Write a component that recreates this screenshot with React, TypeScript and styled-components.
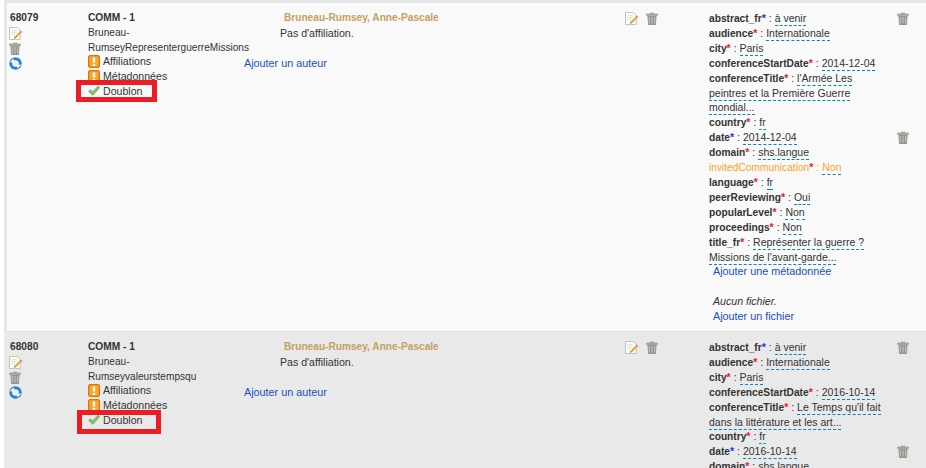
import React from "react";
import styled, { createGlobalStyle } from "styled-components";

const Global = createGlobalStyle`
  html, body { margin: 0; padding: 0; height: 468px; overflow: hidden; background: #fff; }
  body { font-family: "Liberation Sans", Arial, sans-serif; font-size: 10.6px; line-height: 14.9px; color: #333; }
`;

const Page = styled.div`
  width: 926px;
  height: 468px;
  overflow: hidden;
  padding-left: 4px;
  box-sizing: border-box;
`;

const List = styled.div`
  background: #e6e6e6;
  padding: 3px 0 0 3px;
`;

const Row = styled.div<{ $alt?: boolean }>`
  display: grid;
  grid-template-columns: 81px 156px 381px 84px 1fr;
  height: 329px;
  padding-top: 8px;
  box-sizing: border-box;
  margin-left: ${(p) => (p.$alt ? "-3px" : "0")};
  padding-left: ${(p) => (p.$alt ? "3px" : "0")};
  background: ${(p) => (p.$alt ? "#e9e9e9" : "#f9f9f9")};
  border-bottom: 1px solid #dcdcdc;
`;

const IdCol = styled.div`
  padding-left: 3px;
`;

const IdNum = styled.div`
  font-weight: bold;
  font-size: 10.2px;
`;

const IconStack = styled.div`
  display: flex;
  flex-direction: column;
  align-items: flex-start;
  gap: 2px;
  margin: 1px 0 0 -1px;
`;

const DocCol = styled.div`
  position: relative;
`;

const DocType = styled.div`
  font-weight: bold;
  font-size: 10.2px;
`;

const FileName = styled.div`
  width: 170px;
  font-size: 10.1px;
  margin-bottom: -2px;
`;

const Status = styled.div`
  display: flex;
  align-items: center;
  gap: 3px;
  height: 14.9px;
`;

const Highlight = styled.div<{ $w: number; $h: number; $top: number; $left: number }>`
  position: absolute;
  left: ${(p) => p.$left}px;
  top: ${(p) => p.$top}px;
  width: ${(p) => p.$w}px;
  height: ${(p) => p.$h}px;
  border: 5px solid #ed1c24;
  box-sizing: border-box;
`;

const AuthorCol = styled.div`
  display: flex;
  flex-direction: column;
`;

const AuthorName = styled.div`
  font-weight: bold;
  font-size: 10.15px;
  color: #c4a062;
  margin-left: 40px;
`;

const Affiliation = styled.div`
  margin-left: 36px;
  margin-bottom: 15px;
`;

const Link = styled.a`
  color: #1a4fbd;
  text-decoration: none;
  font-size: 10.8px;
`;

const ActionCol = styled.div`
  display: flex;
  gap: 7px;
  align-items: flex-start;
  padding-top: 1px;
`;

const MetaCol = styled.div`
  display: flex;
  flex-direction: column;
`;

const MetaGroup = styled.div`
  display: flex;
  justify-content: space-between;
  align-items: flex-start;
  width: 200px;
`;

const MetaList = styled.div`
  width: 180px;
`;

const MetaLine = styled.div<{ $warn?: boolean }>`
  color: ${(p) => (p.$warn ? "#f5a623" : "inherit")};
  white-space: nowrap;
`;

const MetaKey = styled.span<{ $warn?: boolean }>`
  font-weight: ${(p) => (p.$warn ? "normal" : "bold")};
  font-size: 10.2px;
  line-height: 1;
`;

const Star = styled.span<{ $blue?: boolean }>`
  color: ${(p) => (p.$blue ? "#2233ee" : "#f01818")};
  font-weight: bold;
  line-height: 1;
`;

const Value = styled.span<{ $warn?: boolean }>`
  border-bottom: 1px dashed #0088cc;
  padding-bottom: 1px;
  font-size: 10.5px;
  line-height: 1;
  color: ${(p) => (p.$warn ? "#f5a623" : "inherit")};
`;

const MetaFooter = styled.div`
  padding-left: 4px;
`;

const NoFile = styled.div`
  font-style: italic;
  margin-top: 14.9px;
`;

const TrashSlot = styled.div`
  padding-top: 1px;
`;

const EditIcon = () => (
  <svg width="14" height="13" viewBox="0 0 15 14">
    <path d="M.5.500h8.500l3 3v10h-11.500z" fill="#fcfcf8" stroke="#bdbdb2" />
    <path d="M2.500 4h6M2.500 6h5.500M2.500 8h4" stroke="#dcdcd2" />
    <path d="M5.500 12.500l.6-2.200 5.400-5.300 1.500 1.500-5.300 5.400z" fill="#f0a030" />
    <path d="M11.500 5l1.200-1.200 1.500 1.500-1.200 1.200z" fill="#e468a8" />
    <path d="M5.500 12.500l.4-1.400 1 1z" fill="#553311" />
  </svg>
);

const TrashIcon = () => (
  <svg width="12" height="13" viewBox="0 0 13 14">
    <path d="M4.500 1h4v1h4v1.800h-12v-1.800h4z" fill="#a8a8a1" stroke="#8e8e88" strokeWidth=".5" />
    <path d="M1.500 4h10l-.8 10h-8.400z" fill="#96968f" />
    <path d="M3.600 5.500v7M6.500 5.500v7M9.400 5.500v7" stroke="#c6c6c0" strokeWidth="1.100" />
  </svg>
);

const RefreshIcon = () => (
  <svg width="13" height="13" viewBox="0 0 13 13">
    <circle cx="6.500" cy="6.500" r="6.200" fill="#2f7fcb" />
    <circle cx="6.500" cy="6.500" r="3.300" fill="#eaf3fb" />
    <path d="M.5 5.500L4.500 1.500 5.500 5z" fill="#fff" />
    <path d="M12.500 7.500L8.500 11.500 7.500 8z" fill="#fff" />
  </svg>
);

const WarnIcon = () => (
  <svg width="12" height="13" viewBox="0 0 12 13">
    <rect x=".5" y=".5" width="11" height="12" rx="1.500" fill="#f08a10" stroke="#d87808" />
    <rect x="1.500" y="1.500" width="9" height="10" rx="1" fill="#f7a52e" />
    <rect x="4.800" y="2.500" width="2.400" height="5" fill="#fff" />
    <rect x="4.800" y="8.800" width="2.400" height="2.200" fill="#fff" />
  </svg>
);

const CheckIcon = () => (
  <svg width="12" height="13" viewBox="0 0 12 13">
    <path d="M.5 7.500l2-2 2.300 2.200L10 2l1.800 1.600-7 8z" fill="#80bd6a" stroke="#6aa856" strokeWidth=".5" />
  </svg>
);

type Meta = { key: string; value: string[]; blue?: boolean; warn?: boolean };

const Field = ({ m }: { m: Meta }) => (
  <MetaLine $warn={m.warn}>
    <MetaKey $warn={m.warn}>{m.key}</MetaKey>
    <Star $blue={m.blue}>*</Star> :{" "}
    {m.value.map((line, i) => (
      <React.Fragment key={i}>
        {i > 0 && <br />}
        <Value $warn={m.warn}>{line}</Value>
      </React.Fragment>
    ))}
  </MetaLine>
);

const FieldGroup = ({ items }: { items: Meta[] }) => (
  <MetaGroup>
    <MetaList>
      {items.map((m) => (
        <Field key={m.key} m={m} />
      ))}
    </MetaList>
    <TrashSlot>
      <TrashIcon />
    </TrashSlot>
  </MetaGroup>
);

const firstA: Meta[] = [
  { key: "abstract_fr", value: ["à venir"], blue: true },
  { key: "audience", value: ["Internationale"] },
  { key: "city", value: ["Paris"] },
  { key: "conferenceStartDate", value: ["2014-12-04"] },
  { key: "conferenceTitle", value: ["l'Armée Les", "peintres et la Première Guerre", "mondial..."] },
  { key: "country", value: ["fr"] },
];

const firstB: Meta[] = [
  { key: "date", value: ["2014-12-04"], blue: true },
  { key: "domain", value: ["shs.langue"] },
  { key: "invitedCommunication", value: ["Non"], warn: true },
  { key: "language", value: ["fr"] },
  { key: "peerReviewing", value: ["Oui"] },
  { key: "popularLevel", value: ["Non"] },
  { key: "proceedings", value: ["Non"] },
  { key: "title_fr", value: ["Représenter la guerre ?", "Missions de l'avant-garde..."] },
];

const secondA: Meta[] = [
  { key: "abstract_fr", value: ["à venir"], blue: true },
  { key: "audience", value: ["Internationale"] },
  { key: "city", value: ["Paris"] },
  { key: "conferenceStartDate", value: ["2016-10-14"] },
  { key: "conferenceTitle", value: ["Le Temps qu'il fait", "dans la littérature et les art..."] },
  { key: "country", value: ["fr"] },
];

const secondB: Meta[] = [
  { key: "date", value: ["2016-10-14"], blue: true },
  { key: "domain", value: ["shs.langue"] },
];

type RecordProps = {
  id: string;
  file: string[];
  alt?: boolean;
  box: { w: number; h: number; top: number; left: number };
  groups: Meta[][];
};

const RecordRow = ({ id, file, alt, box, groups }: RecordProps) => (
  <Row $alt={alt}>
    <IdCol>
      <IdNum>{id}</IdNum>
      <IconStack>
        <EditIcon />
        <TrashIcon />
        <RefreshIcon />
      </IconStack>
    </IdCol>
    <DocCol>
      <DocType>COMM - 1</DocType>
      <FileName>
        {file.map((f) => (
          <div key={f}>{f}</div>
        ))}
      </FileName>
      <Status>
        <WarnIcon /> Affiliations
      </Status>
      <Status>
        <WarnIcon /> Métadonnées
      </Status>
      <Status>
        <CheckIcon /> Doublon
      </Status>
      <Highlight $w={box.w} $h={box.h} $top={box.top} $left={box.left} />
    </DocCol>
    <AuthorCol>
      <AuthorName>Bruneau-Rumsey, Anne-Pascale</AuthorName>
      <Affiliation>Pas d'affiliation.</Affiliation>
      <Link href="#">Ajouter un auteur</Link>
    </AuthorCol>
    <ActionCol>
      <EditIcon />
      <TrashIcon />
    </ActionCol>
    <MetaCol>
      {groups.map((g, i) => (
        <FieldGroup key={i} items={g} />
      ))}
      <MetaFooter>
        <Link href="#">Ajouter une métadonnée</Link>
        <NoFile>Aucun fichier.</NoFile>
        <Link href="#">Ajouter un fichier</Link>
      </MetaFooter>
    </MetaCol>
  </Row>
);

export default function App() {
  return (
    <>
      <Global />
      <Page>
        <List>
          <RecordRow
            id="68079"
            file={["Bruneau-", "RumseyRepresenterguerreMissions"]}
            box={{ w: 81, h: 22, top: 69, left: -12 }}
            groups={[firstA, firstB]}
          />
          <RecordRow
            id="68080"
            alt
            file={["Bruneau-", "Rumseyvaleurstempsqu"]}
            box={{ w: 84, h: 24, top: 70, left: -11 }}
            groups={[secondA, secondB]}
          />
        </List>
      </Page>
    </>
  );
}
